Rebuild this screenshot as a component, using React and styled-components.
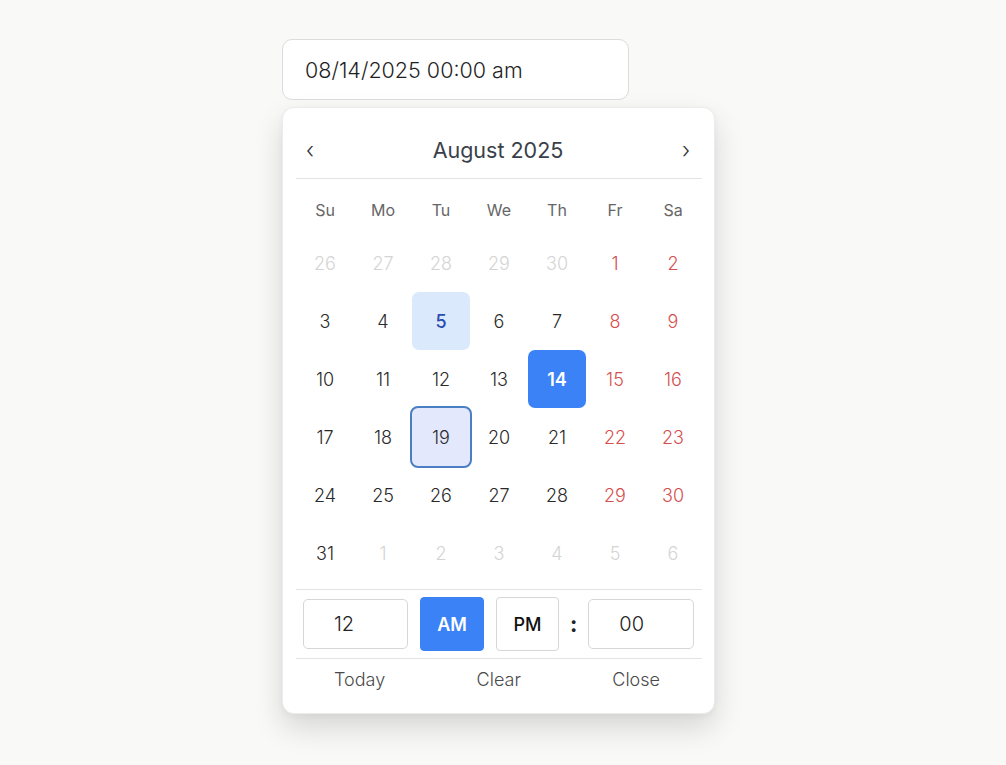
import React, { useState } from "react";
import styled, { createGlobalStyle } from "styled-components";

const GlobalStyle = createGlobalStyle`
  html, body {
    margin: 0;
    background: #f9f9f8;
    font-family: Inter, "Noto Sans", sans-serif;
  }
`;

const WEEKDAYS = ["Su", "Mo", "Tu", "We", "Th", "Fr", "Sa"];

// August 2025 grid, Sunday first
const buildDays = () => {
  const days = [];
  [26, 27, 28, 29, 30].forEach((d) => days.push({ d, outside: true }));
  for (let d = 1; d <= 31; d++) days.push({ d });
  for (let d = 1; d <= 6; d++) days.push({ d, outside: true });
  return days;
};

const App = () => {
  const [meridiem, setMeridiem] = useState("AM");
  const days = buildDays();

  return (
    <>
      <GlobalStyle />
      <Page>
        <DateInput value="08/14/2025 00:00 am" readOnly />
        <Popup>
          <Header>
            <NavBtn>‹</NavBtn>
            <Title>August 2025</Title>
            <NavBtn>›</NavBtn>
          </Header>
          <Grid>
            {WEEKDAYS.map((w) => (
              <Weekday key={w}>{w}</Weekday>
            ))}
            {days.map((day, i) => {
              const col = i % 7;
              const inMonth = !day.outside;
              let variant = "plain";
              if (inMonth && day.d === 14) variant = "selected";
              else if (inMonth && day.d === 5) variant = "today";
              else if (inMonth && day.d === 19) variant = "focused";
              return (
                <Day
                  key={i}
                  $outside={day.outside}
                  $weekend={col >= 5 && inMonth}
                  $variant={variant}
                >
                  {day.d}
                </Day>
              );
            })}
          </Grid>
          <TimeRow>
            <TimeField $w={105} value="12" readOnly />
            <Meridiem $w={64} $active={meridiem === "AM"} onClick={() => setMeridiem("AM")}>
              AM
            </Meridiem>
            <Meridiem $w={63} $active={meridiem === "PM"} onClick={() => setMeridiem("PM")}>
              PM
            </Meridiem>
            <Colon>:</Colon>
            <TimeField $w={106} value="00" readOnly />
          </TimeRow>
          <Footer>
            <FooterBtn>Today</FooterBtn>
            <FooterBtn>Clear</FooterBtn>
            <FooterBtn>Close</FooterBtn>
          </Footer>
        </Popup>
      </Page>
    </>
  );
};

const Page = styled.div`
  padding: 39px 0 60px 282px;
  display: flex;
  flex-direction: column;
  align-items: flex-start;
  gap: 7px;
`;

const DateInput = styled.input`
  box-sizing: border-box;
  width: 347px;
  height: 61px;
  padding: 0 22px;
  border: 1.5px solid #dcdcdc;
  border-radius: 10px;
  background: #fff;
  font-family: Inter, sans-serif;
  font-size: 21.5px;
  font-weight: 300;
  color: #1f1f1f;
  outline: none;
`;

const Popup = styled.div`
  box-sizing: border-box;
  width: 433px;
  height: 607px;
  padding: 13px 12px 0 13px;
  background: #fff;
  border-radius: 12px;
  border: 1px solid #ececec;
  box-shadow: 0 14px 30px rgba(0, 0, 0, 0.14), 0 2px 6px rgba(0, 0, 0, 0.04);
`;

const Header = styled.div`
  display: flex;
  align-items: center;
  justify-content: space-between;
  height: 57px;
  padding: 0 8px 0 6px;
  border-bottom: 1px solid #e3e3e3;
`;

const NavBtn = styled.button`
  border: none;
  background: none;
  font-size: 22px;
  font-weight: 300;
  color: #333;
  padding: 0 4px;
  cursor: pointer;
  font-family: Inter, sans-serif;
`;

const Title = styled.div`
  font-size: 21.5px;
  font-weight: 400;
  color: #3a3f4a;
`;

const Grid = styled.div`
  display: grid;
  grid-template-columns: repeat(7, 58px);
  grid-template-rows: 55px;
  grid-auto-rows: 58px;
  padding-bottom: 7px;
  border-bottom: 1px solid #e3e3e3;
`;

const Weekday = styled.div`
  display: flex;
  align-items: center;
  justify-content: center;
  padding-top: 6px;
  font-size: 16px;
  font-weight: 400;
  color: #666;
`;

const dayColor = (p) => {
  if (p.$variant === "selected") return "#fff";
  if (p.$variant === "today") return "#2a4bb0";
  if (p.$outside) return "#d4d4d4";
  if (p.$weekend) return "#d64f4f";
  return "#2a2a2a";
};

const dayBackground = (p) => {
  if (p.$variant === "selected") return "#3b82f6";
  if (p.$variant === "today") return "#dbe9fc";
  if (p.$variant === "focused") return "#e3e8fd";
  return "transparent";
};

const Day = styled.div`
  box-sizing: border-box;
  display: flex;
  align-items: center;
  justify-content: center;
  border-radius: 7px;
  font-size: 18px;
  font-weight: ${(p) =>
    p.$variant === "selected" ? 600 : p.$variant === "today" ? 500 : 300};
  color: ${dayColor};
  background: ${dayBackground};
  border: ${(p) => (p.$variant === "focused" ? "2px solid #4a7fc4" : "none")};
  ${(p) => p.$variant === "focused" && "margin: -2px; border-radius: 8px;"}
`;

const TimeRow = styled.div`
  display: flex;
  align-items: center;
  gap: 12px;
  padding: 7px 0 7px 7px;
  border-bottom: 1px solid #e3e3e3;
`;

const TimeField = styled.input`
  box-sizing: border-box;
  flex: none;
  width: ${(p) => p.$w}px;
  height: 50px;
  padding: 0 0 0 30px;
  border: 1px solid #d6d6d6;
  border-radius: 5px;
  font-family: Inter, sans-serif;
  font-size: 20px;
  font-weight: 300;
  color: #222;
  outline: none;
`;

const Meridiem = styled.button`
  box-sizing: border-box;
  flex: none;
  width: ${(p) => p.$w}px;
  height: 54px;
  border-radius: 4px;
  border: 1px solid ${(p) => (p.$active ? "#3b82f6" : "#d6d6d6")};
  background: ${(p) => (p.$active ? "#3b82f6" : "#fff")};
  color: ${(p) => (p.$active ? "#fff" : "#111")};
  font-family: Inter, sans-serif;
  font-size: 18px;
  font-weight: ${(p) => (p.$active ? 600 : 500)};
  cursor: pointer;
`;

const Colon = styled.span`
  flex: none;
  margin: 0 -1px 0 -1px;
  font-size: 22px;
  font-weight: 700;
  color: #222;
`;

const Footer = styled.div`
  display: flex;
  justify-content: space-between;
  align-items: center;
  height: 40px;
  padding: 0 42px 0 38px;
`;

const FooterBtn = styled.button`
  border: none;
  background: none;
  padding: 0;
  font-family: Inter, sans-serif;
  font-size: 18px;
  font-weight: 300;
  color: #4a4a4a;
  cursor: pointer;
`;

export default App;
